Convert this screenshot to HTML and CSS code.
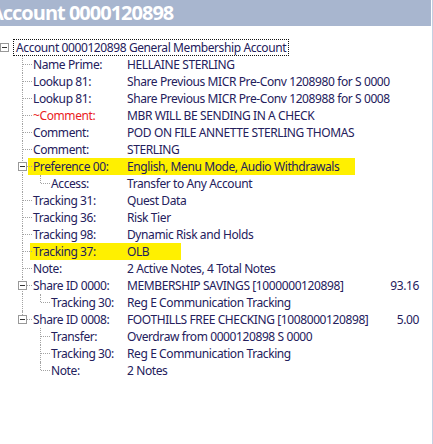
FILE: index.html
```html
<!DOCTYPE html>
<html>
<head>
<meta charset="utf-8">
<link rel="stylesheet" href="styles.css">
</head>
<body>
<div class="pane">
  <div class="title"><span class="title-text">Account 0000120898</span></div>
  <div class="tree">
    <div class="row lvl0 open">
      <span class="tog"></span>
      <span class="focus">Account 0000120898 General Membership Account</span>
    </div>
    <div class="row lvl1"><span class="lbl">Name Prime:</span><span class="val">HELLAINE STERLING</span></div>
    <div class="row lvl1"><span class="lbl">Lookup 81:</span><span class="val">Share Previous MICR Pre-Conv 1208980 for S 0000</span></div>
    <div class="row lvl1"><span class="lbl">Lookup 81:</span><span class="val">Share Previous MICR Pre-Conv 1208988 for S 0008</span></div>
    <div class="row lvl1"><span class="lbl alert">~Comment:</span><span class="val">MBR WILL BE SENDING IN A CHECK</span></div>
    <div class="row lvl1"><span class="lbl">Comment:</span><span class="val">POD ON FILE ANNETTE STERLING THOMAS</span></div>
    <div class="row lvl1"><span class="lbl">Comment:</span><span class="val">STERLING</span></div>
    <div class="row lvl1 open marked">
      <span class="tog"></span>
      <span class="hl hl-pref"><span class="lbl">Preference 00:</span><span class="val">English, Menu Mode, Audio Withdrawals</span></span>
    </div>
    <div class="row lvl2 last"><span class="lbl">Access:</span><span class="val">Transfer to Any Account</span></div>
    <div class="row lvl1"><span class="lbl">Tracking 31:</span><span class="val">Quest Data</span></div>
    <div class="row lvl1"><span class="lbl">Tracking 36:</span><span class="val">Risk Tier</span></div>
    <div class="row lvl1"><span class="lbl">Tracking 98:</span><span class="val">Dynamic Risk and Holds</span></div>
    <div class="row lvl1 marked">
      <span class="hl hl-olb"><span class="lbl">Tracking 37:</span><span class="val">OLB</span></span>
    </div>
    <div class="row lvl1"><span class="lbl">Note:</span><span class="val">2 Active Notes, 4 Total Notes</span></div>
    <div class="row lvl1 open"><span class="tog"></span><span class="lbl">Share ID 0000:</span><span class="val">MEMBERSHIP SAVINGS [1000000120898]</span><span class="amt">93.16</span></div>
    <div class="row lvl2 last"><span class="lbl">Tracking 30:</span><span class="val">Reg E Communication Tracking</span></div>
    <div class="row lvl1 open last"><span class="tog"></span><span class="lbl">Share ID 0008:</span><span class="val">FOOTHILLS FREE CHECKING [1008000120898]</span><span class="amt">5.00</span></div>
    <div class="row lvl2 under-last"><span class="lbl">Transfer:</span><span class="val">Overdraw from 0000120898 S 0000</span></div>
    <div class="row lvl2 under-last"><span class="lbl">Tracking 30:</span><span class="val">Reg E Communication Tracking</span></div>
    <div class="row lvl2 under-last last"><span class="lbl">Note:</span><span class="val">2 Notes</span></div>
  </div>
</div>
</body>
</html>
```

FILE: styles.css
```css
html, body {
  margin: 0;
  padding: 0;
  background: #ffffff;
}

.pane {
  width: 432px;
  height: 444px;
  border-right: 1px solid #c5d0e2;
  overflow: hidden;
  font-family: "Noto Sans", "Open Sans", sans-serif;
  font-size: 12px;
  letter-spacing: -0.4px;
  color: #24205c;
}

/* caption strip */
.title {
  width: 431px;
  height: 26px;
  background: #a8b6cf;
  overflow: hidden;
  white-space: nowrap;
}

.title-text {
  display: block;
  margin-left: -10px;
  font-family: "Open Sans", "Noto Sans", sans-serif;
  font-weight: 700;
  font-size: 20px;
  letter-spacing: -1px;
  line-height: 25px;
  color: #ffffff;
}

/* tree view */
.tree {
  width: 419px;
  padding-top: 13px;
}

.row {
  position: relative;
  display: flex;
  align-items: center;
  height: 17px;
  line-height: 17px;
  white-space: nowrap;
}

.lvl0 { padding-left: 13px; }
.lvl1 { padding-left: 33px; }
.lvl2 { padding-left: 51px; }

.lvl1 .lbl { width: 94px; }
.lvl2 .lbl { width: 76px; }

.lbl { flex: none; }
.alert { color: #ea1c24; }
.val { flex: none; }
.amt { margin-left: auto; }

.focus {
  height: 15px;
  line-height: 15px;
  padding: 0 2px;
  border: 1px dotted #111111;
}

/* connector lines: vertical stem at the node's own level */
.lvl1::before,
.lvl2::before {
  content: "";
  position: absolute;
  top: 0;
  bottom: 0;
  border-left: 1px dotted #a3a3a3;
}
.lvl1::before { left: 22px; }
.lvl2::before { left: 40px; }
.lvl1.last::before,
.lvl2.last::before { bottom: 9px; }

/* horizontal branch to the label */
.lvl1::after,
.lvl2::after {
  content: "";
  position: absolute;
  top: 8px;
  width: 9px;
  border-top: 1px dotted #a3a3a3;
}
.lvl1::after { left: 23px; }
.lvl2::after { left: 41px; }

/* parent stem that keeps running past second level rows */
.lvl2 {
  background-image: linear-gradient(#a3a3a3 50%, transparent 50%);
  background-size: 1px 2px;
  background-position: 22px 0;
  background-repeat: repeat-y;
}
.lvl2.under-last { background-image: none; }

/* expand / collapse box */
.tog {
  position: absolute;
  top: 4px;
  width: 7px;
  height: 7px;
  border: 1px solid #999999;
  background: #ffffff;
  z-index: 1;
}
.tog::before {
  content: "";
  position: absolute;
  left: 1px;
  top: 3px;
  width: 5px;
  height: 1px;
  background: #333333;
}
.lvl0 .tog { left: 0; }
.lvl1 .tog { left: 18px; }

/* highlighter marks */
.hl {
  display: flex;
  align-items: center;
  height: 17px;
  background: #fff000;
  margin-left: -5px;
  padding-left: 5px;
}
.hl .lbl { width: 94px; }
.hl-pref { padding-right: 16px; }
.hl-olb { margin-left: -3px; padding-left: 3px; padding-right: 32px; }
```
